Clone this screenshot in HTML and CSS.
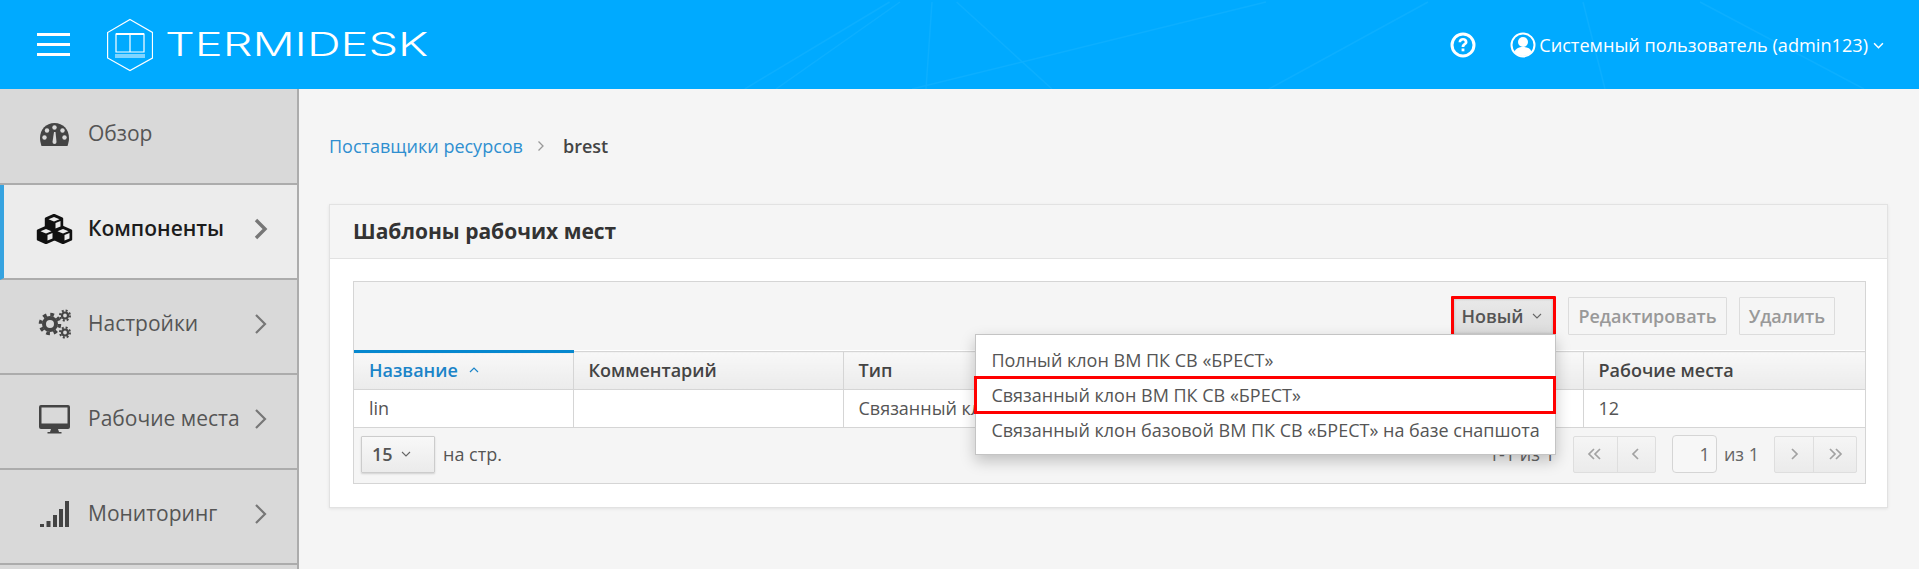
FILE: index.html
```html
<!DOCTYPE html>
<html lang="ru">
<head>
<meta charset="utf-8">
<title>Termidesk</title>
<link rel="stylesheet" href="styles.css">
</head>
<body>
<header class="topbar">
  <svg class="topbar-lines" viewBox="0 0 1919 89" preserveAspectRatio="none" aria-hidden="true">
    <path d="M889.600 2 L744.800 89 M900 2 L776 89 M932 2 L926 89 M956.600 2 L1052 89 M1266 2 L912 89 M1428 2 L1269 89 M1583 2 L1605 89 M1700 2 L1864 89" />
  </svg>
  <div class="burger"><span></span><span></span><span></span></div>
  <div class="logo">
    <svg class="logo-mark" viewBox="0 0 46 54" aria-hidden="true">
      <path class="logo-line" d="M23 1.500 L45.500 14.500 V40 L23 52.500 L.6 40 V14.500 Z"/>
      <path class="logo-line" d="M9 16 H37 V34 H9 Z M23 16 V34"/>
      <path class="logo-bar" d="M9 15h28v2H9z M8 36.500h30v1H8z M8 38.500h30v1H8z"/>
    </svg>
    <span class="logo-text">TERMIDESK</span>
  </div>
  <div class="topbar-right">
    <svg class="help" viewBox="0 0 26 26" aria-hidden="true">
      <circle cx="13" cy="13" r="11" fill="none" stroke="#fff" stroke-width="3"/>
      <path d="M8.500 10.300c0-2.800 2.100-4.300 4.500-4.300s4.500 1.600 4.500 3.900c0 3-3.100 2.900-3.100 5.100h-2.800c0-3.700 3.100-3.400 3.100-5 0-.9-.7-1.500-1.700-1.500s-1.800.7-1.800 1.800z" fill="#fff"/>
      <rect x="11.600" y="16.500" width="2.800" height="2.800" fill="#fff"/>
    </svg>
    <span class="user">
      <svg class="user-icon" viewBox="0 0 26 26" aria-hidden="true">
        <circle cx="13" cy="13" r="11.500" fill="none" stroke="#fff" stroke-width="2"/>
        <circle cx="13" cy="10" r="5" fill="#fff"/>
        <path d="M4.500 20c1-3.500 4-5 8.500-5s7.500 1.500 8.500 5c-2 2.500-5 4-8.500 4s-6.500-1.500-8.500-4z" fill="#fff"/>
      </svg>
      <span class="user-name">Системный пользователь (admin123)</span>
      <svg class="user-caret" viewBox="0 0 10 6" aria-hidden="true"><path d="M1 1l4 4 4-4"/></svg>
    </span>
  </div>
</header>

<div class="layout">
  <nav class="sidebar">
    <a class="nav-item">
      <svg class="nav-icon" viewBox="0 0 37 30" aria-hidden="true">
        <path d="M18.500 4C10 4 4 10.500 4 19c0 2.500.5 5 1.500 8h26c1-3 1.500-5.500 1.500-8C33 10.500 27 4 18.500 4z" fill="#444"/>
        <g fill="#d9d9d9"><circle cx="18.500" cy="8.500" r="2.200"/><circle cx="11" cy="11.500" r="2.200"/><circle cx="26.500" cy="11.500" r="2.200"/><circle cx="8.500" cy="18.500" r="2.200"/><circle cx="28.500" cy="18.500" r="2.200"/></g>
        <path d="M16.500 23l1.500-10h1.500l1 10a2 2 0 1 1-4 0z" fill="#d9d9d9"/>
      </svg>
      <span class="nav-label">Обзор</span>
    </a>
    <a class="nav-item active">
      <svg class="nav-icon" viewBox="0 0 37 30" aria-hidden="true">
        <g stroke="#111" stroke-width="2.400" stroke-linejoin="round">
          <path d="M18 1 L26 4.500 V13.500 L18 17 L10 13.500 V4.500 Z" fill="#111"/>
          <path d="M10 13 L18 16.500 V25.500 L10 29 L2 25.500 V16.500 Z" fill="#111"/>
          <path d="M27 13 L35 16.500 V25.500 L27 29 L19 25.500 V16.500 Z" fill="#111"/>
        </g>
        <g fill="#ececec">
          <path d="M18 3 L23.500 5.200 18 7.500 12.500 5.200z"/>
          <path d="M10 15 L15.500 17.200 10 19.500 4.500 17.200z"/>
          <path d="M27 15 L32.500 17.200 27 19.500 21.500 17.200z"/>
          <path d="M19.500 9 V14.500 L24.500 12.500 V7z"/>
          <path d="M11.500 21 V26.500 L16.500 24.500 V19z"/>
          <path d="M28.500 21 V26.500 L33.500 24.500 V19z"/>
        </g>
      </svg>
      <span class="nav-label">Компоненты</span>
      <svg class="nav-arrow" viewBox="0 0 14 22" aria-hidden="true"><path d="M2 2l9 9-9 9"/></svg>
    </a>
    <a class="nav-item">
      <svg class="nav-icon" viewBox="0 0 37 30" aria-hidden="true">
        <g fill="none" stroke="#444">
          <circle cx="14" cy="15" r="6" stroke-width="4"/>
          <circle cx="14" cy="15" r="9.500" stroke-width="3.500" stroke-dasharray="3.700 3.760"/>
          <circle cx="29" cy="6.500" r="3" stroke-width="2.200"/>
          <circle cx="29" cy="6.500" r="5" stroke-width="2" stroke-dasharray="2 1.930"/>
          <circle cx="29" cy="23.500" r="3" stroke-width="2.200"/>
          <circle cx="29" cy="23.500" r="5" stroke-width="2" stroke-dasharray="2 1.930"/>
        </g>
      </svg>
      <span class="nav-label">Настройки</span>
      <svg class="nav-arrow" viewBox="0 0 14 22" aria-hidden="true"><path d="M2 2l9 9-9 9"/></svg>
    </a>
    <a class="nav-item">
      <svg class="nav-icon" viewBox="0 0 37 30" aria-hidden="true">
        <path d="M5 1h27a2 2 0 0 1 2 2v20a2 2 0 0 1-2 2H5a2 2 0 0 1-2-2V3a2 2 0 0 1 2-2zm.500 2.500v16h26v-16z" fill="#444" fill-rule="evenodd"/>
        <path d="M15 25h7l1 3h2.500v1.500h-14V28H14z" fill="#444"/>
      </svg>
      <span class="nav-label">Рабочие места</span>
      <svg class="nav-arrow" viewBox="0 0 14 22" aria-hidden="true"><path d="M2 2l9 9-9 9"/></svg>
    </a>
    <a class="nav-item">
      <svg class="nav-icon" viewBox="0 0 37 30" aria-hidden="true">
        <g fill="#444"><rect x="4" y="25" width="4" height="3"/><rect x="10.500" y="22" width="4" height="6"/><rect x="17" y="16" width="4" height="12"/><rect x="23" y="10" width="4" height="18"/><rect x="29" y="2" width="4" height="26"/></g>
      </svg>
      <span class="nav-label">Мониторинг</span>
      <svg class="nav-arrow" viewBox="0 0 14 22" aria-hidden="true"><path d="M2 2l9 9-9 9"/></svg>
    </a>
  </nav>

  <main class="content">
    <div class="breadcrumb">
      <a class="crumb-link">Поставщики ресурсов</a>
      <svg class="crumb-sep" viewBox="0 0 8 12" aria-hidden="true"><path d="M1.500 1.500L6 6l-4.500 4.500"/></svg>
      <span class="crumb-current">brest</span>
    </div>

    <section class="panel">
      <h2 class="panel-title">Шаблоны рабочих мест</h2>
      <div class="panel-body">
        <div class="grid-box">
          <div class="toolbar">
            <div class="new-wrap">
              <button class="btn btn-new">Новый
                <svg class="caret" viewBox="0 0 10 6" aria-hidden="true"><path d="M1 1l4 4 4-4"/></svg>
              </button>
              <ul class="menu">
                <li class="menu-item menu-first">Полный клон ВМ ПК СВ «БРЕСТ»</li>
                <li class="menu-item menu-marked">Связанный клон ВМ ПК СВ «БРЕСТ»</li>
                <li class="menu-item">Связанный клон базовой ВМ ПК СВ «БРЕСТ» на базе снапшота</li>
              </ul>
            </div>
            <button class="btn btn-off">Редактировать</button>
            <button class="btn btn-off">Удалить</button>
          </div>

          <table class="grid">
            <colgroup><col class="col-name"><col class="col-comment"><col class="col-type"><col></colgroup>
            <thead>
              <tr>
                <th class="sorted">Название <svg class="sort" viewBox="0 0 10 6" aria-hidden="true"><path d="M1 5l4-4 4 4"/></svg></th>
                <th>Комментарий</th>
                <th>Тип</th>
                <th>Рабочие места</th>
              </tr>
            </thead>
            <tbody>
              <tr>
                <td>lin</td>
                <td></td>
                <td>Связанный клон ВМ ПК СВ «БРЕСТ»</td>
                <td>12</td>
              </tr>
            </tbody>
          </table>

          <div class="pager-row">
            <div class="per-page">
              <div class="select">15
                <svg class="caret" viewBox="0 0 10 6" aria-hidden="true"><path d="M1 1l4 4 4-4"/></svg>
              </div>
              <span>на стр.</span>
            </div>
            <div class="pager">
              <span class="range">1-1 из 1</span>
              <div class="pg-group">
                <span class="pg-btn pg-wide"><svg viewBox="0 0 16 12" aria-hidden="true"><path d="M7 1L2 6l5 5M13 1L8 6l5 5"/></svg></span>
                <span class="pg-btn"><svg viewBox="0 0 16 12" aria-hidden="true"><path d="M10 1L5 6l5 5"/></svg></span>
              </div>
              <span class="pg-input">1</span>
              <span class="pg-total">из 1</span>
              <div class="pg-group">
                <span class="pg-btn"><svg viewBox="0 0 16 12" aria-hidden="true"><path d="M6 1l5 5-5 5"/></svg></span>
                <span class="pg-btn pg-wide"><svg viewBox="0 0 16 12" aria-hidden="true"><path d="M3 1l5 5-5 5M9 1l5 5-5 5"/></svg></span>
              </div>
            </div>
          </div>
        </div>
      </div>
    </section>
  </main>
</div>
</body>
</html>
```
FILE: styles.css
```css
* { box-sizing: border-box; }
html, body { margin: 0; height: 100%; overflow: hidden; }
body {
  font-family: "Open Sans", "Noto Sans", sans-serif;
  font-size: 18px;
  color: #444;
  background: #f5f5f5;
  display: flex;
  flex-direction: column;
}

/* top bar */
.topbar {
  position: relative;
  flex: 0 0 89px;
  display: flex;
  align-items: center;
  background: #00aaff;
  color: #fff;
  padding-left: 37px;
}
.topbar-lines { position: absolute; inset: 0; width: 100%; height: 100%; }
.topbar-lines path { fill: none; stroke: #0cafff; stroke-width: 1.500; }
.burger { position: relative; width: 33px; display: flex; flex-direction: column; gap: 7px; }
.burger span { height: 3px; background: #fff; }
.logo { position: relative; display: flex; align-items: center; margin-left: 37px; }
.logo-mark { width: 46px; height: 54px; }
.logo-line { fill: none; stroke: #fff; stroke-width: 1.200; }
.logo-bar { fill: #fff; }
.logo-text {
  margin-left: 12px;
  font-family: Inter, sans-serif;
  font-weight: 300;
  font-size: 33px;
  line-height: 1;
  transform: scaleX(1.42);
  transform-origin: left center;
}
.topbar-right {
  position: relative;
  margin-left: auto;
  display: flex;
  align-items: center;
  padding-right: 35px;
}
.help { width: 26px; height: 26px; }
.user { display: flex; align-items: center; margin-left: 34px; }
.user-icon { width: 26px; height: 26px; }
.user-name { margin-left: 3px; font-size: 18.150px; }
.user-caret { width: 11px; height: 7px; margin-left: 5px; margin-top: 2px; fill: none; stroke: #fff; stroke-width: 1.400; }

.layout { flex: 1; display: flex; min-height: 0; }

/* sidebar */
.sidebar {
  flex: 0 0 299px;
  padding-top: 1px;
  background: #d9d9d9;
  border-right: 2px solid #acacac;
}
.nav-item {
  height: 95px;
  display: flex;
  align-items: center;
  padding: 0 29px 6px 36px;
  border-bottom: 2px solid #acacac;
  color: #555;
  font-size: 21px;
}
.nav-item.active {
  background: #ececec;
  color: #1c1c1c;
  font-weight: 600;
  border-left: 4px solid #36a3e0;
  padding-left: 32px;
}
.nav-icon { flex: none; width: 37px; height: 30px; }
.nav-label { margin: 0 0 2px 15px; flex: 1; white-space: nowrap; }
.nav-arrow { flex: none; width: 14px; height: 22px; fill: none; stroke: #777; stroke-width: 2.200; }
.active .nav-arrow { stroke-width: 3.400; }

/* content */
.content { flex: 1; min-width: 0; padding: 0 31px 0 30px; }
.breadcrumb { display: flex; align-items: center; height: 115px; padding-bottom: 2px; }
.crumb-link { color: #2f8fd0; }
.crumb-sep { width: 8px; height: 12px; margin: 0 18px 0 14px; fill: none; stroke: #999; stroke-width: 1.300; }
.crumb-current { font-weight: 600; color: #444; }

.panel {
  background: #fff;
  border: 1px solid #e2e2e2;
  box-shadow: 0 1px 3px rgba(0, 0, 0, .08);
}
.panel-title {
  margin: 0;
  height: 54px;
  display: flex;
  align-items: center;
  padding: 0 0 2px 23px;
  font-size: 21px;
  font-weight: 700;
  color: #333;
  background: #f5f5f5;
  border-bottom: 1px solid #e2e2e2;
}
.panel-body { padding: 22px 21px 23px 23px; }
.grid-box { border: 1px solid #d5d5d5; background: #f5f5f5; }

.toolbar {
  height: 68px;
  display: flex;
  justify-content: flex-end;
  align-items: center;
  gap: 12px;
  padding: 0 30px 0 0;
}
.btn {
  font-family: inherit;
  font-size: 18px;
  font-weight: 600;
  height: 38px;
  padding: 0 9px;
  border-radius: 1px;
  border: 1px solid #dcdcdc;
  background: #f5f5f5;
  color: #999;
}
.new-wrap { position: relative; }
.btn-new {
  display: flex;
  align-items: center;
  width: 105px;
  height: 41px;
  padding: 0 7px;
  border: 3px solid #f00;
  background: linear-gradient(#e9e9e9, #dcdcdc);
  color: #555;
  box-shadow: inset 0 0 3px rgba(0, 0, 0, .2);
}
.caret { width: 10px; height: 6px; margin-left: 8px; fill: none; stroke: #666; stroke-width: 1.100; }
.menu {
  position: absolute;
  z-index: 5;
  top: 38px;
  right: 0;
  width: 581px;
  height: 121px;
  margin: 0;
  padding: 8px 0 0;
  list-style: none;
  background: #fff;
  border: 1px solid #c4c4c4;
  box-shadow: 0 6px 14px rgba(0, 0, 0, .22);
}
.menu-item {
  height: 36px;
  padding: 0 15px;
  line-height: 33px;
  white-space: nowrap;
  color: #555;
}
.menu-first { height: 33px; line-height: 35px; }
.menu-marked {
  height: 38px;
  margin: 0 -1px 0 -2px;
  padding-left: 14px;
  line-height: 32px;
  border: 3px solid #f00;
}

.grid { width: 100%; border-collapse: collapse; table-layout: fixed; background: #fff; }
.col-name { width: 219px; }
.col-comment { width: 270px; }
.col-type { width: 740px; }
.grid th, .grid td {
  padding: 0 0 2px 15px;
  text-align: left;
  border-right: 1px solid #d5d5d5;
  border-top: 1px solid #d5d5d5;
  white-space: nowrap;
  overflow: hidden;
}
.grid th:last-child, .grid td:last-child { border-right: 0; }
.grid th {
  height: 38px;
  font-weight: 600;
  color: #444;
  background: linear-gradient(#f8f8f8, #ebebeb);
}
.grid td { height: 37px; padding-bottom: 1px; color: #555; }
.grid th.sorted { color: #1a84c8; border-top: 3px solid #0688cf; }
.sort { width: 10px; height: 6px; margin: 0 0 4px 6px; fill: none; stroke: #1a84c8; stroke-width: 1.200; }

.pager-row {
  height: 56px;
  border-top: 1px solid #d5d5d5;
  display: flex;
  align-items: center;
  justify-content: space-between;
  padding: 0 8px 2px 7px;
}
.per-page { display: flex; align-items: center; gap: 8px; color: #555; }
.select {
  display: flex;
  align-items: center;
  width: 74px;
  height: 37px;
  padding-left: 10px;
  background: linear-gradient(#f8f8f8, #ebebeb);
  border: 1px solid #ccc;
  border-radius: 1px;
  font-weight: 600;
  color: #555;
  box-shadow: 0 1px 2px rgba(0, 0, 0, .15);
}
.pager { display: flex; align-items: center; color: #666; }
.range { margin-right: 18px; }
.pg-group { display: flex; height: 37px; border: 1px solid #dedede; border-radius: 2px; background: linear-gradient(#f5f5f5, #ebebeb); }
.pg-btn { width: 38px; display: flex; align-items: center; justify-content: center; }
.pg-wide { width: 43px; }
.pg-btn + .pg-btn { border-left: 1px solid #dedede; }
.pg-btn svg { width: 16px; height: 12px; fill: none; stroke: #a2a2a2; stroke-width: 1.700; }
.pg-input {
  width: 45px;
  height: 38px;
  margin-left: 16px;
  padding-right: 6px;
  text-align: right;
  line-height: 36px;
  background: #f7f7f7;
  border: 1px solid #d5d5d5;
  border-radius: 4px;
}
.pg-total { margin: 0 15px 0 7px; }
```
